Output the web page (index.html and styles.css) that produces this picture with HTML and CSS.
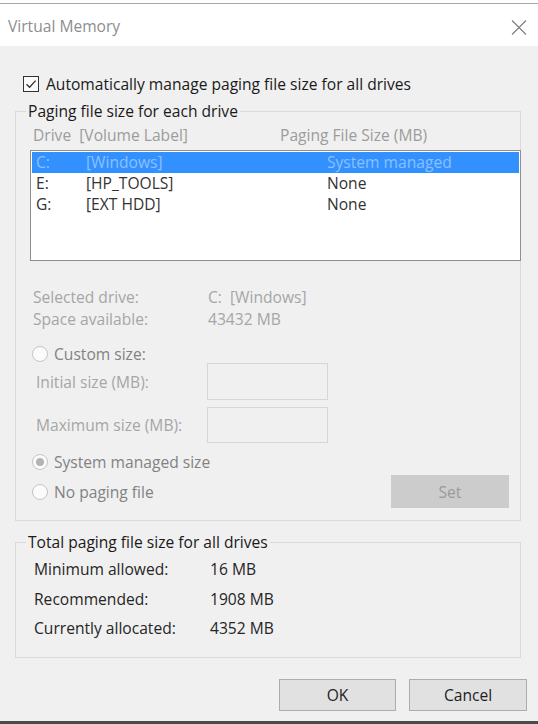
FILE: index.html
```html
<!DOCTYPE html>
<html lang="en">
<head>
    <meta charset="UTF-8">
    <meta name="viewport" content="width=device-width, initial-scale=1.0">
    <title>Virtual Memory</title>
    <link rel="stylesheet" href="styles.css">
</head>
<body>
    <div class="window">
        <div class="titlebar">
            <span class="title">Virtual Memory</span>
            <svg class="close" width="16" height="15" viewBox="0 0 16 15">
                <path d="M1 0.5 L15 14.5 M15 0.5 L1 14.5" stroke="#7c7c7c" stroke-width="1.1" fill="none"/>
            </svg>
        </div>
        <div class="content">
            <label class="auto">
                <svg class="checkbox" width="16" height="16" viewBox="0 0 16 16">
                    <rect x="0.5" y="0.5" width="15" height="15" fill="#fafafa" stroke="#333"/>
                    <path d="M3.5 8.2 L6.6 11.2 L12.6 4.6" stroke="#333" stroke-width="1.3" fill="none"/>
                </svg>
                Automatically manage paging file size for all drives
            </label>

            <fieldset class="group drives">
                <legend>Paging file size for each drive</legend>
                <div class="list-head">
                    <span class="col-drive">Drive&nbsp; [Volume Label]</span>
                    <span>Paging File Size (MB)</span>
                </div>
                <div class="drive-list">
                    <div class="drive-row selected">
                        <span class="letter">C:</span>
                        <span class="volume">[Windows]</span>
                        <span>System managed</span>
                    </div>
                    <div class="drive-row">
                        <span class="letter">E:</span>
                        <span class="volume">[HP_TOOLS]</span>
                        <span>None</span>
                    </div>
                    <div class="drive-row">
                        <span class="letter">G:</span>
                        <span class="volume">[EXT HDD]</span>
                        <span>None</span>
                    </div>
                </div>

                <div class="info">
                    <span>Selected drive:</span><span>C:&nbsp; [Windows]</span>
                    <span>Space available:</span><span>43432 MB</span>
                </div>

                <div class="option custom"><span class="radio"></span>Custom size:</div>
                <div class="size-field first">
                    <span>Initial size (MB):</span>
                    <span class="textbox"></span>
                </div>
                <div class="size-field">
                    <span>Maximum size (MB):</span>
                    <span class="textbox"></span>
                </div>

                <div class="bottom-options">
                    <div class="radios">
                        <div class="option"><span class="radio checked"></span>System managed size</div>
                        <div class="option"><span class="radio"></span>No paging file</div>
                    </div>
                    <button class="btn set" disabled>Set</button>
                </div>
            </fieldset>

            <fieldset class="group totals">
                <legend>Total paging file size for all drives</legend>
                <div class="totals-grid">
                    <span>Minimum allowed:</span><span>16 MB</span>
                    <span>Recommended:</span><span>1908 MB</span>
                    <span>Currently allocated:</span><span>4352 MB</span>
                </div>
            </fieldset>

            <div class="actions">
                <button class="btn">OK</button>
                <button class="btn">Cancel</button>
            </div>
        </div>
    </div>
</body>
</html>
```

FILE: styles.css
```css
html, body {
    height: 724px;
    margin: 0;
}
body {
    font-family: "Open Sans", "Noto Sans", sans-serif;
    font-size: 15.6px;
    color: #262626;
    background-color: #fff;
    padding-top: 3px;
    box-sizing: border-box;
    display: flex;
    flex-direction: column;
    overflow: hidden;
}
.window {
    flex: 1;
    display: flex;
    flex-direction: column;
    background-color: #f0f0f0;
    border-top: 1px solid #a8a8a8;
    border-bottom: 3px solid #4a4a4a;
}

.titlebar {
    height: 42px;
    background-color: #fff;
    display: flex;
    align-items: center;
    justify-content: space-between;
    padding: 2px 11px 0 8px;
    box-sizing: border-box;
}
.titlebar .title {
    color: #8e8e8e;
}
.titlebar .close {
    margin-top: 2px;
}

.content {
    padding: 0 17px 0 15px;
}

.auto {
    display: flex;
    align-items: center;
    height: 20px;
    margin: 28px 0 0 8px;
    color: #1a1a1a;
}
.auto .checkbox {
    margin-right: 7px;
}

.group {
    margin: 7px 0 0;
    border: 1px solid #dadada;
    padding: 4px 16px 12px 14px;
    min-width: 0;
}
.group legend {
    padding: 0 2px;
    margin-left: -4px;
    line-height: 20px;
    color: #1a1a1a;
}

.list-head {
    display: flex;
    line-height: 20px;
    color: #9c9c9c;
    padding-left: 3px;
}
.list-head .col-drive {
    width: 247px;
}

.drive-list {
    margin: 5px -17px 0 0;
    height: 111px;
    box-sizing: border-box;
    border: 1px solid #8f8f8f;
    background-color: #fff;
    padding: 1px 1px 0;
}
.drive-row {
    display: flex;
    height: 21px;
    line-height: 21px;
    padding-left: 4px;
    color: #333;
}
.drive-row.selected {
    background-color: #3391ff;
    color: #8cc0ff;
}
.drive-row .letter {
    width: 50px;
}
.drive-row .volume {
    width: 241px;
}

.info {
    display: grid;
    grid-template-columns: 175px auto;
    line-height: 22px;
    margin-top: 25px;
    padding-left: 3px;
    color: #a6a6a6;
}

.option {
    display: flex;
    align-items: center;
    height: 20px;
    color: #828282;
}
.option.custom {
    margin-top: 14px;
    padding-left: 2px;
}
.radio {
    width: 14px;
    height: 14px;
    border: 1px solid #c4c4c4;
    border-radius: 50%;
    background-color: #fbfbfb;
    margin-right: 6px;
    display: flex;
    align-items: center;
    justify-content: center;
}
.radio.checked::after {
    content: "";
    width: 8px;
    height: 8px;
    border-radius: 50%;
    background-color: #b4b4b4;
}

.size-field {
    display: flex;
    align-items: center;
    height: 36px;
    margin-top: 7px;
    padding-left: 6px;
    color: #a6a6a6;
}
.size-field.first {
    height: 37px;
    margin-top: -1px;
}
.size-field span:first-child {
    width: 171px;
}
.textbox {
    width: 121px;
    height: 100%;
    box-sizing: border-box;
    border: 1px solid #d6d6d6;
    background-color: #f0f0f0;
}

.bottom-options {
    display: flex;
    justify-content: space-between;
    align-items: flex-start;
    margin-top: 9px;
    padding-left: 2px;
}
.radios .option + .option {
    margin-top: 10px;
}

.btn {
    font-family: inherit;
    font-size: 15.6px;
    height: 32px;
    width: 118px;
    border: 1px solid #adadad;
    background-color: #e1e1e1;
    color: #1e1e1e;
    padding: 0;
}
.btn.set {
    height: 33px;
    margin-top: 23px;
    margin-right: -5px;
    border-color: #cccccc;
    background-color: #cccccc;
    color: #9a9a9a;
}

.group.totals {
    margin-top: 11px;
    padding: 3px 16px 13px 18px;
}
.group.totals legend {
    margin-left: -8px;
}
.totals-grid {
    display: grid;
    grid-template-columns: 176px auto;
    line-height: 29.5px;
    color: #262626;
}

.actions {
    display: flex;
    justify-content: flex-end;
    gap: 13px;
    margin: 21px -6px 0 0;
}
.actions .btn:first-child {
    width: 117px;
}
```
